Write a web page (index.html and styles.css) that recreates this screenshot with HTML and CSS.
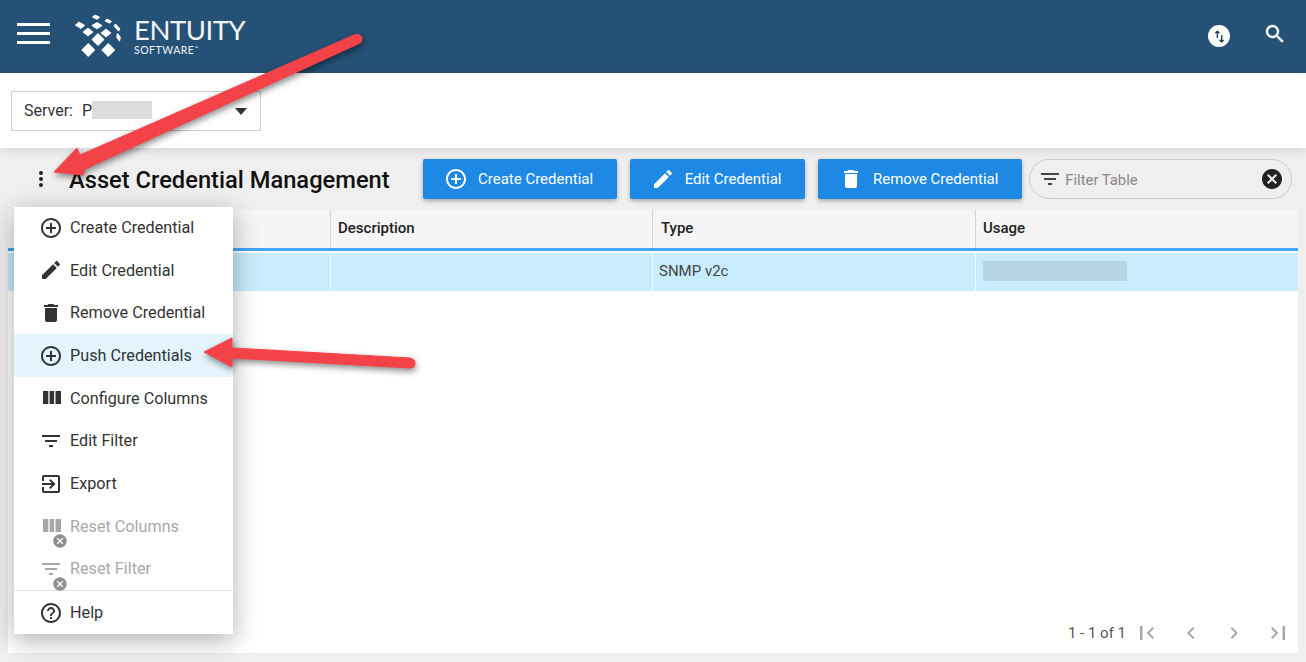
FILE: index.html
```html
<!DOCTYPE html>
<html lang="en">
<head>
<meta charset="utf-8">
<title>Asset Credential Management</title>
<link rel="stylesheet" href="styles.css">
</head>
<body>
<svg class="defs" width="0" height="0" aria-hidden="true">
  <symbol id="i-add" viewBox="0 0 24 24"><path d="M13 7h-2v4H7v2h4v4h2v-4h4v-2h-4V7zm-1-5C6.48 2 2 6.48 2 12s4.48 10 10 10 10-4.48 10-10S17.52 2 12 2zm0 18c-4.41 0-8-3.59-8-8s3.59-8 8-8 8 3.59 8 8-3.59 8-8 8z"/></symbol>
  <symbol id="i-edit" viewBox="0 0 24 24"><path d="M3 17.25V21h3.75L17.81 9.94l-3.75-3.75L3 17.25zM20.71 7.04c.39-.39.39-1.02 0-1.41l-2.34-2.34c-.39-.39-1.02-.39-1.41 0l-1.83 1.83 3.75 3.75 1.83-1.83z"/></symbol>
  <symbol id="i-delete" viewBox="0 0 24 24"><path d="M6 19c0 1.1.9 2 2 2h8c1.1 0 2-.9 2-2V7H6v12zM19 4h-3.5l-1-1h-5l-1 1H5v2h14V4z"/></symbol>
  <symbol id="i-columns" viewBox="0 0 24 24"><path d="M10.600 18h4.500V5h-4.500v13zM4 18h5.300V5H4v13zM16.500 5v13H22V5h-5.500z"/></symbol>
  <symbol id="i-filter" viewBox="0 0 24 24"><path d="M10 18h4v-2h-4v2zM3 6v2h18V6H3zm3 7h12v-2H6v2z"/></symbol>
  <symbol id="i-export" viewBox="0 0 24 24"><path d="M10.090 15.590L11.500 17l5-5-5-5-1.410 1.410L12.670 11H3v2h9.670l-2.580 2.590zM19 3H5c-1.110 0-2 .9-2 2v4h2V5h14v14H5v-4H3v4c0 1.100.89 2 2 2h14c1.100 0 2-.9 2-2V5c0-1.100-.9-2-2-2z"/></symbol>
  <symbol id="i-help" viewBox="0 0 24 24"><path d="M11 18h2v-2h-2v2zm1-16C6.48 2 2 6.48 2 12s4.48 10 10 10 10-4.48 10-10S17.52 2 12 2zm0 18c-4.41 0-8-3.59-8-8s3.59-8 8-8 8 3.59 8 8-3.59 8-8 8zm0-14c-2.210 0-4 1.790-4 4h2c0-1.100.9-2 2-2s2 .9 2 2c0 2-3 1.750-3 5h2c0-2.250 3-2.500 3-5 0-2.210-1.790-4-4-4z"/></symbol>
  <symbol id="i-cancel" viewBox="0 0 24 24"><path d="M12 2C6.470 2 2 6.470 2 12s4.470 10 10 10 10-4.470 10-10S17.530 2 12 2zm5 13.590L15.590 17 12 13.410 8.410 17 7 15.590 10.590 12 7 8.410 8.410 7 12 10.590 15.590 7 17 8.410 13.410 12 17 15.590z"/></symbol>
  <symbol id="i-first" viewBox="0 0 24 24"><path d="M5 5h2.500v14H5zM19 7.400L17.600 6l-6 6 6 6 1.400-1.400L14.400 12z"/></symbol>
  <symbol id="i-prev" viewBox="0 0 24 24"><path d="M15.410 7.410L14 6l-6 6 6 6 1.410-1.410L10.830 12z"/></symbol>
  <symbol id="i-next" viewBox="0 0 24 24"><path d="M10 6L8.590 7.410 13.170 12l-4.580 4.590L10 18l6-6z"/></symbol>
  <symbol id="i-last" viewBox="0 0 24 24"><path d="M5 7.400L6.400 6l6 6-6 6L5 16.600 9.600 12zM16.500 5H19v14h-2.500z"/></symbol>
</svg>

<header class="topbar">
  <button class="hamburger" aria-label="Menu"><span></span><span></span><span></span></button>
  <svg class="logo-mark" viewBox="73 12 52 46" aria-hidden="true">
    <g fill="#fff" stroke="#fff" stroke-width="1.500" stroke-linejoin="round">
      <path d="M88.300 44l6 6-6 6-6-6z"/>
      <path d="M108.300 44l6 6-6 6-6-6z"/>
      <path d="M98 34l5.500 5.500L98 45l-5.500-5.500z"/>
      <path d="M88 28.500l4.500 3.500L88 35.500 83.500 32z"/>
      <path d="M106 29.500l4.500 3.500-4.500 3.500-4.500-3.500z"/>
      <path d="M97 23l4.500 2.700-4.500 2.700-4.500-2.700z"/>
      <path d="M79 22.500l5 3-3 2.500-5-3z"/>
      <path d="M95 15.500l4 1.800-2 1.500-4-1.800z"/>
      <path d="M107 19.500l4 2-1.500 1.300-4-2z"/>
      <path d="M115.500 24.500l4 4.500-1 1.500-4-4.500z"/>
      <path d="M117.500 34l2.500 3.500-.5 3-2.500-3.500z"/>
    </g>
  </svg>
  <div class="logo-text">
    <div class="logo-name">ENTUITY</div>
    <div class="logo-sub">SOFTWARE<sup>™</sup></div>
  </div>
  <div class="topbar-actions">
    <span class="swap-badge">
      <svg viewBox="0 0 24 24" width="17" height="17" aria-hidden="true"><path fill="#1f3f5f" d="M9 3L4.800 7.500H8V14h2V7.500h3.200zM15 21l4.200-4.500H16V10h-2v6.500h-3.200z"/></svg>
    </span>
    <svg class="search" viewBox="0 0 24 24" aria-hidden="true"><path d="M15.500 14h-.79l-.28-.27C15.410 12.590 16 11.110 16 9.500 16 5.910 13.090 3 9.500 3S3 5.910 3 9.500 5.910 16 9.500 16c1.610 0 3.090-.59 4.230-1.570l.27.28v.79l5 4.990L20.490 19l-4.990-5zm-6 0C7.010 14 5 11.990 5 9.500S7.010 5 9.500 5 14 7.010 14 9.500 11.990 14 9.500 14z"/></svg>
  </div>
</header>

<section class="serverbar">
  <div class="server-select">
    <span class="server-label">Server:</span>
    <span class="server-value">P<span class="mask-server"></span></span>
    <span class="caret"></span>
  </div>
</section>

<main class="content">
  <div class="toolbar">
    <button class="kebab" aria-label="More"><span></span><span></span><span></span></button>
    <h1 class="title">Asset Credential Management</h1>
    <div class="actions">
      <button class="btn"><svg class="ic"><use href="#i-add"/></svg>Create Credential</button>
      <button class="btn"><svg class="ic"><use href="#i-edit"/></svg>Edit Credential</button>
      <button class="btn"><svg class="ic"><use href="#i-delete"/></svg>Remove Credential</button>
    </div>
    <div class="filter">
      <svg class="ic"><use href="#i-filter"/></svg>
      <span class="filter-text">Filter Table</span>
      <svg class="ic clear"><use href="#i-cancel"/></svg>
    </div>
  </div>

  <div class="panel">
    <div class="grid head">
      <div class="cell"></div>
      <div class="cell">Description</div>
      <div class="cell">Type</div>
      <div class="cell">Usage</div>
    </div>
    <div class="grid row">
      <div class="cell"></div>
      <div class="cell"></div>
      <div class="cell">SNMP v2c</div>
      <div class="cell"><span class="mask-usage"></span></div>
    </div>
    <div class="pager">
      <span class="pager-text">1 - 1 of 1</span>
      <svg class="ic"><use href="#i-first"/></svg>
      <svg class="ic"><use href="#i-prev"/></svg>
      <svg class="ic"><use href="#i-next"/></svg>
      <svg class="ic"><use href="#i-last"/></svg>
    </div>
  </div>
</main>

<nav class="menu">
  <div class="menu-list">
    <div class="item"><svg class="ic"><use href="#i-add"/></svg>Create Credential</div>
    <div class="item"><svg class="ic"><use href="#i-edit"/></svg>Edit Credential</div>
    <div class="item"><svg class="ic"><use href="#i-delete"/></svg>Remove Credential</div>
    <div class="item active"><svg class="ic"><use href="#i-add"/></svg>Push Credentials</div>
    <div class="item"><svg class="ic"><use href="#i-columns"/></svg>Configure Columns</div>
    <div class="item"><svg class="ic"><use href="#i-filter"/></svg>Edit Filter</div>
    <div class="item"><svg class="ic"><use href="#i-export"/></svg>Export</div>
    <div class="item disabled"><span class="ic-wrap"><svg class="ic"><use href="#i-columns"/></svg><svg class="badge"><use href="#i-cancel"/></svg></span>Reset Columns</div>
    <div class="item disabled"><span class="ic-wrap"><svg class="ic"><use href="#i-filter"/></svg><svg class="badge"><use href="#i-cancel"/></svg></span>Reset Filter</div>
  </div>
  <div class="item help"><svg class="ic"><use href="#i-help"/></svg>Help</div>
</nav>

<svg class="arrows" viewBox="0 0 1306 662" aria-hidden="true">
  <g fill="#f44348" stroke="#f44348" stroke-width="1" stroke-linejoin="round">
    <path d="M54 172L77 148 80 155 354 35Q360 33 362 38 363 42 358 44L85 169 83 175z"/>
    <path d="M204 352L232 338 232 348 410 358Q415 359 415 363 415 368 410 368L232 358 232 367z"/>
  </g>
</svg>
</body>
</html>
```
FILE: styles.css
```css
* { box-sizing: border-box; }
html, body { margin: 0; height: 662px; overflow: hidden; }
body {
  position: relative;
  display: flex;
  flex-direction: column;
  font-family: Roboto, "Liberation Sans", sans-serif;
  color: #333;
  background: #efefef;
}
button { font: inherit; border: 0; background: none; padding: 0; }
.defs { position: absolute; }
.ic { width: 24px; height: 24px; fill: currentColor; flex: none; display: block; }

/* top bar */
.topbar {
  flex: none;
  height: 73px;
  display: flex;
  align-items: flex-start;
  background: #265176;
  color: #fff;
}
.hamburger {
  width: 33px;
  margin: 23px 23px 0 17px;
  display: flex;
  flex-direction: column;
  gap: 6px;
}
.hamburger span { display: block; height: 3px; background: #fff; }
.logo-mark { width: 52px; height: 46px; margin-top: 12px; }
.logo-text { margin: 16px 0 0 9px; color: #f2f5f8; font-family: Lato, sans-serif; }
.logo-name { font-size: 27.500px; line-height: 28px; letter-spacing: -.45px; }
.logo-sub { font-size: 10.500px; line-height: 11px; letter-spacing: .5px; margin-top: 1px; }
.logo-sub sup { font-size: 5px; vertical-align: 4px; line-height: 0; }
.topbar-actions {
  margin-left: auto;
  display: flex;
  align-items: flex-start;
  padding-right: 19px;
}
.swap-badge {
  width: 22px;
  height: 22px;
  margin-top: 25px;
  border-radius: 50%;
  background: #fff;
  display: flex;
  align-items: center;
  justify-content: center;
}
.search { width: 24px; height: 24px; margin: 22px 0 0 33px; fill: #fff; stroke: #fff; stroke-width: .4; }

/* server selector */
.serverbar {
  flex: none;
  height: 75px;
  padding: 18px 11px 0;
  background: #fff;
  position: relative;
  box-shadow: 0 2px 10px rgba(0, 0, 0, .12);
}
.server-select {
  width: 250px;
  height: 40px;
  border: 1px solid #ccc;
  display: flex;
  align-items: center;
  padding: 0 13px 2px 12px;
  font-size: 16px;
  color: #333;
}
.server-value { margin-left: 9px; display: flex; align-items: center; }
.mask-server { display: block; width: 60px; height: 18px; background: #dcdcdc; filter: blur(.5px); }
.caret {
  margin-left: auto;
  margin-top: 2px;
  border-left: 6px solid transparent;
  border-right: 6px solid transparent;
  border-top: 7px solid #333;
}

/* content */
.content {
  flex: 1;
  min-height: 0;
  display: flex;
  flex-direction: column;
  padding: 11px 8px 9px;
}
.toolbar { flex: none; height: 40px; display: flex; align-items: center; }
.kebab {
  width: 40px;
  margin-left: 13px;
  display: flex;
  flex-direction: column;
  align-items: center;
  gap: 2px;
}
.kebab span { width: 4px; height: 4px; border-radius: 50%; background: #222; }
.title {
  flex: 0 0 354px;
  margin: 1px 0 0 8px;
  font-size: 23.700px;
  font-weight: 500;
  color: #111;
  white-space: nowrap;
}
.actions { display: flex; gap: 13px; }
.btn {
  height: 40px;
  display: flex;
  align-items: center;
  gap: 10px;
  padding: 0 24px 0 21px;
  border-radius: 2px;
  background: #1e88e5;
  color: #fff;
  font-size: 15px;
  box-shadow: 0 2px 4px rgba(0, 0, 0, .3);
}
.btn:nth-child(2) { padding: 0 23.500px 0 20.500px; }
.filter {
  flex: none;
  width: 263px;
  height: 40px;
  margin-left: 7px;
  padding: 0 7px 0 8px;
  display: flex;
  align-items: center;
  gap: 3px;
  border: 1px solid #ccc;
  border-radius: 20px;
  color: #444;
}
.filter-text { font-size: 14.800px; color: #888; margin-top: 1px; }
.clear { margin-left: auto; color: #222; }

/* table */
.panel {
  flex: 1;
  min-height: 0;
  margin-top: 11px;
  display: flex;
  flex-direction: column;
  background: #fff;
}
.grid { display: grid; grid-template-columns: 323px 322px 323px 322px; font-size: 15px; }
.head { height: 41px; background: #f5f5f5; border-bottom: 3px solid #42a5f5; color: #222; font-weight: 500; }
.head .cell { padding-bottom: 2px; }
.head .cell:nth-child(3) { padding-left: 8px; }
.row { height: 38px; margin-top: 2px; background: #c8ecfd; color: #444; }
.row .cell { padding-bottom: 2px; padding-left: 6px; }
.cell { display: flex; align-items: center; padding: 0 8px 0 7px; border-right: 1px solid #d4d4d4; }
.row .cell { border-right-color: #eefaff; }
.cell:last-child { border-right: 0; }
.row .cell:last-child { padding-left: 7px; }
.mask-usage { display: block; width: 144px; height: 20px; background: #b6d5e2; filter: blur(.5px); }
.pager {
  margin-top: auto;
  height: 40px;
  padding-right: 8px;
  display: flex;
  align-items: center;
  justify-content: flex-end;
  gap: 19.670px;
  color: #a8a8a8;
}
.pager-text { font-size: 15px; color: #555; margin-right: -10.670px; }

/* overlays */
.menu {
  position: absolute;
  left: 14px;
  top: 207px;
  width: 219px;
  height: 427px;
  overflow: hidden;
  background: #fff;
  box-shadow: 0 6px 24px rgba(0, 0, 0, .32);
}
.menu-list { margin-top: -.7px; border-bottom: 1px solid #e6e6e6; }
.item {
  height: 42.670px;
  display: flex;
  align-items: center;
  gap: 7px;
  padding-left: 25px;
  font-size: 16.200px;
  color: #333;
}
.item.active { background: #e3f4fc; }
.item.disabled { color: #a8a8a8; }
.ic-wrap { position: relative; display: block; }
.badge {
  position: absolute;
  left: 13px;
  top: 19px;
  width: 16px;
  height: 16px;
  fill: #8f8f8f;
}
.arrows {
  position: absolute;
  left: 0;
  top: 0;
  width: 1306px;
  height: 662px;
  pointer-events: none;
  filter: drop-shadow(1px 3px 3px rgba(0, 0, 0, .45));
}
```
